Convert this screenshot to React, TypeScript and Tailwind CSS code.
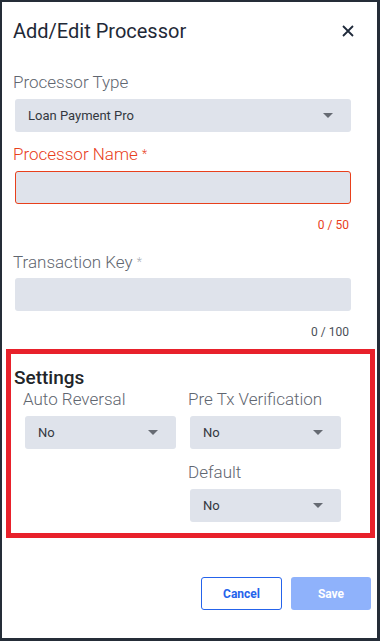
import React from "react";

function Caret() {
  return (
    <svg width="10" height="5" viewBox="0 0 10 5" className="shrink-0">
      <path d="M0 0 L10 0 L5 5 Z" fill="#666b73" />
    </svg>
  );
}

function Select({ value, className = "" }: { value: string; className?: string }) {
  return (
    <div
      className={`h-[33px] rounded-[3px] bg-[#dfe3eb] flex items-center justify-between pl-[13px] pr-[18px] text-[13px] text-[#333840] ${className}`}
    >
      <span>{value}</span>
      <Caret />
    </div>
  );
}

export default function App() {
  return (
    <div
      className="w-[380px] h-[641px] bg-[#252d38] pt-[2px] pl-[2px] pr-[3px] pb-[3px]"
      style={{ fontFamily: "Roboto, 'Noto Sans', sans-serif" }}
    >
      <div className="w-full h-full bg-white flex flex-col">
        <div className="flex items-center justify-between pl-[11px] pr-[23px] pt-[17px] h-[41px]">
          <span className="text-[20px] leading-[24px] text-[#1f2937]">Add/Edit Processor</span>
          <svg width="12" height="12" viewBox="0 0 12 12">
            <path d="M1 1 L11 11 M11 1 L1 11" stroke="#1f2a3a" strokeWidth="1.8" />
          </svg>
        </div>

        <div className="flex flex-col pl-[11px] pr-[26px]">
          <div className="mt-[29px] text-[17px] leading-[20px] text-[#5f6670] font-light">Processor Type</div>
          <Select value="Loan Payment Pro" className="mt-[7px] ml-[2px]" />

          <div className="mt-[12px] text-[17px] leading-[20px] text-[#e8401c] font-light">
            Processor Name <span className="text-[12px] align-top">*</span>
          </div>
          <div className="mt-[7px] ml-[2px] h-[33px] rounded-[3px] bg-[#dfe3eb] border border-[#e8401c]" />
          <div className="mt-[13px] text-right pr-[2px] text-[12px] leading-[16px] text-[#e8401c]">0 / 50</div>

          <div className="mt-[19px] text-[17px] leading-[20px] text-[#5f6670] font-light">
            Transaction Key <span className="text-[12px] align-top text-[#a9adb3]">*</span>
          </div>
          <div className="mt-[6px] ml-[2px] h-[33px] rounded-[3px] bg-[#dfe3eb]" />
          <div className="mt-[13px] text-right pr-[2px] text-[12px] leading-[16px] text-[#4b5058]">0 / 100</div>
        </div>

        <div className="mt-[9px] ml-[4px] mr-[2px] h-[189px] border-[5px] border-[#e8212b] flex flex-col pl-[3px]">
          <div className="mt-[13px] text-[19px] leading-[22px] text-[#222529] font-medium">Settings</div>
          <div className="flex">
            <div className="w-[165px] pl-[9px]">
              <div className="text-[17px] leading-[20px] text-[#5f6670] font-light">Auto Reversal</div>
              <Select value="No" className="mt-[7px] ml-[2px] w-[151px]" />
            </div>
            <div className="pl-[9px]">
              <div className="text-[17px] leading-[20px] text-[#5f6670] font-light">Pre Tx Verification</div>
              <Select value="No" className="mt-[7px] ml-[2px] w-[151px]" />
              <div className="mt-[13px] text-[17px] leading-[20px] text-[#5f6670] font-light">Default</div>
              <Select value="No" className="mt-[7px] ml-[2px] w-[151px]" />
            </div>
          </div>
        </div>

        <div className="mt-[39px] flex justify-end gap-[9px] pr-[6px]">
          <button className="w-[81px] h-[33px] rounded-[3px] border border-[#2563eb] bg-white text-[#2563eb] text-[12px] font-bold">
            Cancel
          </button>
          <button className="w-[80px] h-[33px] rounded-[3px] bg-[#8fb2fb] text-white text-[12px] font-bold">
            Save
          </button>
        </div>
      </div>
    </div>
  );
}
